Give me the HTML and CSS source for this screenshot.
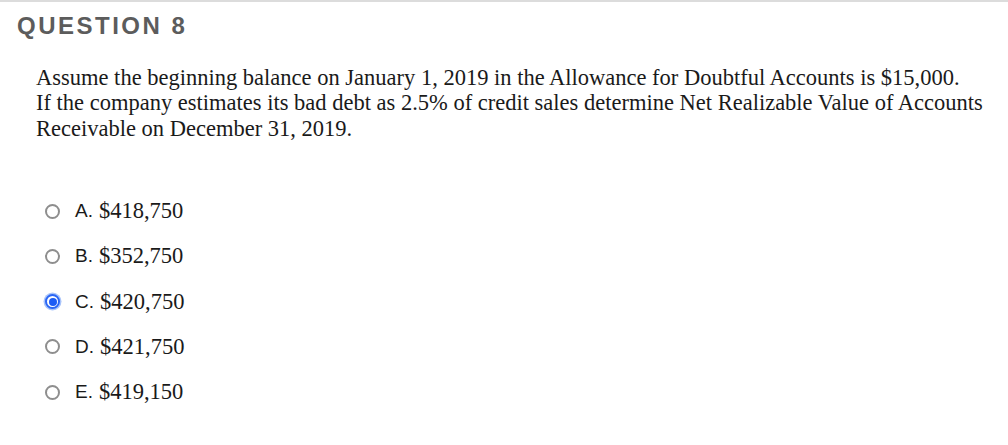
FILE: index.html
```html
<!DOCTYPE html>
<html>
<head>
<meta charset="utf-8">
<link rel="stylesheet" href="styles.css">
</head>
<body>
<div class="page">
  <h2 class="qtitle">QUESTION 8</h2>
  <p class="qtext">Assume the beginning balance on January 1, 2019 in the Allowance for Doubtful Accounts is $15,000.<br>If the company estimates its bad debt as 2.5% of credit sales determine Net Realizable Value of Accounts<br>Receivable on December 31, 2019.</p>
  <ul class="options">
    <li class="opt"><span class="radio"></span><span class="letter">A.</span><span class="val">$418,750</span></li>
    <li class="opt"><span class="radio"></span><span class="letter">B.</span><span class="val">$352,750</span></li>
    <li class="opt"><span class="radio checked"></span><span class="letter">C.</span><span class="val">$420,750</span></li>
    <li class="opt"><span class="radio"></span><span class="letter">D.</span><span class="val">$421,750</span></li>
    <li class="opt"><span class="radio"></span><span class="letter">E.</span><span class="val">$419,150</span></li>
  </ul>
</div>
</body>
</html>
```
FILE: styles.css
```css
html, body { margin: 0; padding: 0; background: #fff; }
.page {
  border-top: 2px solid #dcdcdc;
  height: 443px;
  overflow: hidden;
}
.qtitle {
  margin: 12.4px 0 0 17px;
  font-family: "Liberation Sans", Arial, sans-serif;
  font-weight: bold;
  font-size: 24px;
  letter-spacing: 2.5px;
  color: #5c5c5c;
  line-height: 24px;
}
.qtext {
  margin: 26.2px 0 0 36px;
  font-family: "Liberation Serif", "Times New Roman", serif;
  font-size: 22.5px;
  line-height: 25.5px;
  color: #1a1a1a;
}
.options {
  list-style: none;
  margin: 47.3px 0 0 45px;
  padding: 0;
  display: flex;
  flex-direction: column;
}
.opt {
  display: flex;
  align-items: center;
  height: 45.25px;
  color: #1a1a1a;
}
.radio {
  width: 15px;
  height: 15px;
  box-sizing: border-box;
  border: 2px solid #8e8e8e;
  border-radius: 50%;
  margin-right: 15px;
  flex: none;
}
.radio.checked {
  border: 2px solid #2a66f5;
  background: #fff;
  box-shadow: 0 0 0 1.5px #a9c4fa;
  position: relative;
}
.radio.checked::after {
  content: "";
  position: absolute;
  left: 1.5px; top: 1.5px;
  width: 8px; height: 8px;
  border-radius: 50%;
  background: #1c5cf5;
}
.letter {
  font-family: "Liberation Sans", Arial, sans-serif;
  font-size: 19px;
  margin-right: 6px;
}
.val {
  font-family: "Liberation Serif", "Times New Roman", serif;
  font-size: 22.5px;
}
```
